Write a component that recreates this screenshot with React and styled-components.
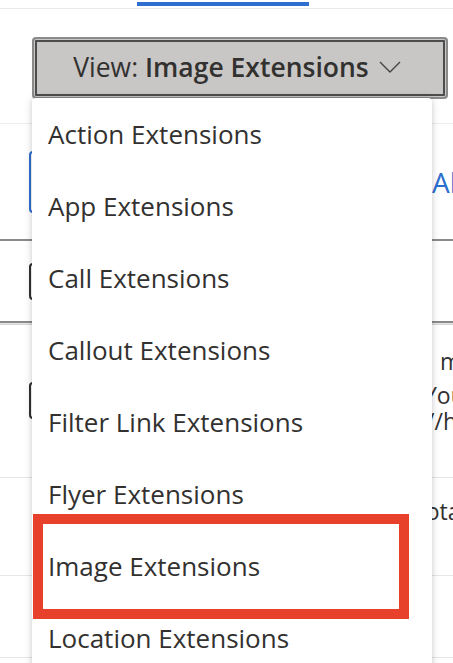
import React from 'react';
import styled, { createGlobalStyle } from 'styled-components';

const GlobalStyle = createGlobalStyle`
  body {
    margin: 0;
    background: #fff;
    font-family: "Open Sans", "Noto Sans", sans-serif;
    color: #323130;
    overflow: hidden;
  }
`;

const Page = styled.div`
  position: relative;
  width: 453px;
  height: 663px;
  overflow: hidden;
`;

const TabStrip = styled.div`
  height: 6px;
  padding-left: 137px;
  border-bottom: 1px solid #ebebeb;
`;

const TabIndicator = styled.div`
  width: 172px;
  height: 4px;
  margin-top: 2px;
  background: #2f6fcf;
`;

const Toolbar = styled.div`
  height: 115px;
  padding: 28px 0 0 32px;
  box-sizing: border-box;
  border-bottom: 1px solid #ececec;
`;

const ViewButton = styled.button`
  display: flex;
  align-items: center;
  justify-content: center;
  gap: 10px;
  width: 416px;
  height: 62px;
  padding: 0 6px 2px 0;
  border: 2px solid #8a8a8a;
  border-radius: 4px;
  background: #c8c7c5;
  box-shadow: inset 0 0 0 1px #c8c7c5, inset 0 0 0 3px #4d4d4d;
  font-family: inherit;
  font-size: 26.5px;
  color: #323130;
  cursor: pointer;

  strong {
    font-weight: 600;
  }
`;

const Chevron = () => (
  <svg width="22" height="12" viewBox="0 0 22 12" fill="none">
    <polyline points="1,1 11,11 21,1" stroke="#444" strokeWidth="1.4" />
  </svg>
);

const FilterRow = styled.div`
  display: grid;
  grid-template-columns: 403px 1fr;
  align-items: center;
  height: 115px;
  padding-left: 29px;
  box-sizing: border-box;
`;

const OutlineButton = styled.div`
  width: 220px;
  height: 62px;
  border: 2px solid #2f6fcf;
  border-radius: 4px;
  box-sizing: border-box;
`;

const LinkText = styled.span`
  color: #2b6fcf;
  font-size: 28px;
  white-space: nowrap;
`;

const TableRow = styled.div`
  display: grid;
  grid-template-columns: 371px 1fr;
  align-items: ${(p) => (p.$top ? 'start' : 'center')};
  height: ${(p) => p.$height}px;
  padding-left: 29px;
  box-sizing: border-box;
  border-top: ${(p) => (p.$header ? '2px solid #8a8a8a' : '1px solid #e6e6e6')};
  border-bottom: ${(p) => (p.$header ? '2px solid #8a8a8a' : 'none')};
  box-shadow: ${(p) => (p.$header ? '0 2px 0 #d4d4d4' : 'none')};
`;

const Checkbox = styled.div`
  grid-row: 1;
  align-self: center;
  width: 36px;
  height: 37px;
  border: 2px solid #323130;
  border-radius: 4px;
  box-sizing: border-box;
`;

const Cell = styled.div`
  grid-column: 2;
  grid-row: 1;
  display: flex;
  flex-direction: column;
  padding-top: ${(p) => p.$pad || 0}px;
  font-size: 23px;
  line-height: 26px;
  white-space: nowrap;
`;

const Line = styled.span`
  padding-left: ${(p) => p.$indent}px;
  margin-bottom: ${(p) => p.$space || 0}px;
`;

const Menu = styled.div`
  position: absolute;
  left: 32px;
  top: 98px;
  width: 400px;
  height: 620px;
  background: #fff;
  border-radius: 4px;
  box-shadow: 0 0 9px rgba(0, 0, 0, 0.16), 0 2px 4px rgba(0, 0, 0, 0.08);
`;

const MenuItem = styled.div`
  position: relative;
  display: flex;
  align-items: center;
  height: 72px;
  padding-left: 16px;
  font-size: 26px;
  color: #323130;

  ${(p) =>
    p.$marked &&
    `
    &::after {
      content: '';
      position: absolute;
      left: 1px;
      top: -16px;
      width: 376px;
      height: 105px;
      box-sizing: border-box;
      border: 10px solid #e8412b;
    }
  `}
`;

const items = [
  'Action Extensions',
  'App Extensions',
  'Call Extensions',
  'Callout Extensions',
  'Filter Link Extensions',
  'Flyer Extensions',
  'Image Extensions',
  'Location Extensions',
  'Price Extensions',
];

export default function App() {
  return (
    <Page>
      <GlobalStyle />
      <TabStrip>
        <TabIndicator />
      </TabStrip>
      <Toolbar>
        <ViewButton>
          <span>
            View: <strong>Image Extensions</strong>
          </span>
          <Chevron />
        </ViewButton>
      </Toolbar>
      <FilterRow>
        <OutlineButton />
        <LinkText>All extensions</LinkText>
      </FilterRow>
      <TableRow $header $height={84}>
        <Checkbox />
      </TableRow>
      <TableRow $top $height={154}>
        <Checkbox />
        <Cell $pad={24}>
          <Line $indent={40} $space={8}>mage</Line>
          <Line $indent={24}>Your image</Line>
          <Line $indent={20}>://help</Line>
        </Cell>
      </TableRow>
      <TableRow $top $height={98}>
        <Cell $pad={20}>
          <Line $indent={13}>Total</Line>
        </Cell>
      </TableRow>
      <TableRow $height={82} />
      <TableRow $height={40} />

      <Menu>
        {items.map((label) => (
          <MenuItem key={label} $marked={label === 'Image Extensions'}>
            {label}
          </MenuItem>
        ))}
      </Menu>
    </Page>
  );
}
